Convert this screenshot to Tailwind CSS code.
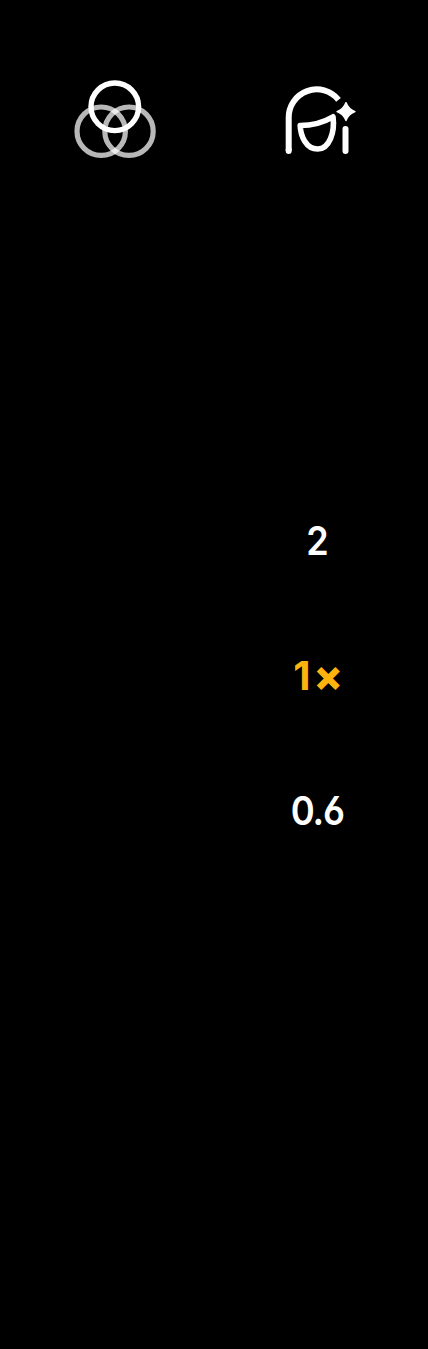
<!DOCTYPE html>
<html lang="en">
<head>
<meta charset="utf-8">
<title>Camera</title>
<script src="https://cdn.jsdelivr.net/npm/@tailwindcss/browser@4"></script>
</head>
<body class="bg-black text-white">
<main class="grid h-[1349px] w-[428px] grid-cols-[226px_182px] content-start overflow-hidden bg-black pt-[74px]">
  <button class="flex h-[90px] items-start pl-[65px]" aria-label="Filters">
    <svg class="h-[90px] w-[100px]" viewBox="65 74 100 90" fill="none" stroke-width="5.2">
      <circle cx="101.2" cy="131.2" r="24.2" stroke="#fff" stroke-opacity=".72"/>
      <circle cx="129" cy="131.2" r="24.2" stroke="#fff" stroke-opacity=".72"/>
      <circle cx="114.8" cy="106.8" r="23.8" stroke="#fff" stroke-width="5.4"/>
    </svg>
  </button>
  <button class="flex h-[90px] items-start pl-[44px]" aria-label="Beauty">
    <svg class="h-[90px] w-[100px]" viewBox="270 74 100 90" fill="none" stroke="#fff" stroke-width="6" stroke-linejoin="round">
      <path d="M288.7 151V118A28 28 0 0 1 338.5 99.8" />
      <path d="M345.5 129V151M288.7 150v1" stroke-linecap="round"/>
      <path d="M300.2 125.5Q318 125.5 333 116.8C335 132 329.5 149 317.7 149C306 149 300.6 136 300.2 125.5Z" stroke-width="5.6"/>
      <path d="M346 102.6Q348.4 109.2 355 111.6Q348.4 114 346 120.6Q343.6 114 337 111.6Q343.6 109.2 346 102.6Z" fill="#fff" stroke-width="1.4"/>
    </svg>
  </button>
  <div class="col-start-2 mt-[309px] flex flex-col items-center font-['Inter',sans-serif] text-[40px] leading-[135px] font-semibold">
    <button class="h-[135px] scale-x-[0.9]">2</button>
    <button class="flex h-[135px] gap-[3px] pl-[2px] font-bold text-[#ffb30f]"><span>1</span><span class="text-[43px] font-extrabold">×</span></button>
    <button class="h-[135px] scale-x-[0.91] tracking-[-1.2px] [font-feature-settings:'cv03']">0.6</button>
  </div>
</main>
</body>
</html>
